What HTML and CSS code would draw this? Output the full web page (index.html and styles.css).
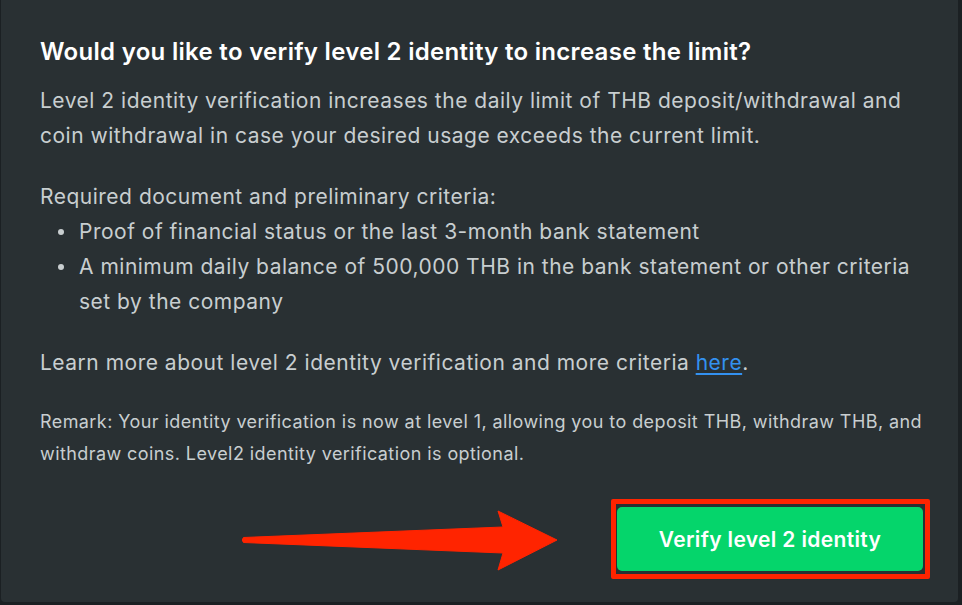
FILE: index.html
```html
<!DOCTYPE html>
<html lang="en">
<head>
<meta charset="utf-8">
<title>Verify level 2 identity</title>
<link rel="stylesheet" href="styles.css">
</head>
<body>
<div class="modal">
  <h2 class="title">Would you like to verify level 2 identity to increase the limit?</h2>
  <p class="lead">Level 2 identity verification increases the daily limit of THB deposit/withdrawal and coin withdrawal in case your desired usage exceeds the current limit.</p>
  <p class="req">Required document and preliminary criteria:</p>
  <ul class="list">
    <li>Proof of financial status or the last 3-month bank statement</li>
    <li>A minimum daily balance of 500,000 THB in the bank statement or other criteria set by the company</li>
  </ul>
  <p class="more">Learn more about level 2 identity verification and more criteria <a href="#" class="link">here</a>.</p>
  <p class="remark">Remark: Your identity verification is now at level 1, allowing you to deposit THB, withdraw THB, and withdraw coins. Level2 identity verification is optional.</p>
  <div class="actions">
    <svg class="arrow" width="330" height="70" viewBox="0 0 330 70">
      <path d="M2.5 30.5 Q0 33 2.5 35.5 L262 46 L257 63 L316 33 L257 4 L262 20 Z" fill="#ff2400" stroke="#ff2400" stroke-width="1" stroke-linejoin="round"/>
    </svg>
    <div class="btn-wrap">
      <button class="btn">Verify level 2 identity</button>
      <span class="highlight"></span>
    </div>
  </div>
</div>
</body>
</html>
```

FILE: styles.css
```css
html, body {
  margin: 0;
  padding: 0;
}
body {
  background: #1b2023;
  width: 962px;
  height: 605px;
  overflow: hidden;
  font-family: "Inter", "Noto Sans", sans-serif;
}
.modal {
  box-sizing: border-box;
  width: 957px;
  height: 602px;
  margin-left: 1px;
  background: #293033;
  border-radius: 0 0 4px 4px;
  padding: 37px 0 0 39px;
  color: #c8ced0;
}
.title {
  margin: 0;
  font-size: 24px;
  line-height: 30px;
  font-weight: 600;
  color: #ffffff;
  letter-spacing: 0.3px;
}
.lead, .req, .more {
  margin: 0;
  font-size: 21px;
  line-height: 35px;
  letter-spacing: 0.5px;
  width: 880px;
}
.lead { margin-top: 16px; }
.req { margin-top: 26px; }
.list {
  margin: 0;
  padding: 0 0 0 39px;
  font-size: 21px;
  line-height: 35px;
  letter-spacing: 0.5px;
  width: 860px;
  list-style: none;
}
.list li::before {
  content: "";
  display: inline-block;
  width: 6px;
  height: 6px;
  border-radius: 50%;
  background: currentColor;
  margin-left: -21px;
  margin-right: 15px;
  vertical-align: 4px;
}
.more { margin-top: 26px; }
.link {
  color: #3391f0;
  text-decoration: underline;
  text-underline-offset: 3px;
}
.remark {
  margin: 26px 0 0;
  font-size: 18px;
  line-height: 32px;
  letter-spacing: 0.42px;
  width: 900px;
}
.actions {
  position: relative;
  display: flex;
  justify-content: flex-end;
  padding-right: 35px;
  margin-top: 37px;
}
.arrow {
  position: absolute;
  left: 201px;
  top: 0;
}
.btn-wrap {
  position: relative;
}
.btn {
  display: block;
  width: 306px;
  height: 64px;
  border: none;
  border-radius: 5px;
  background: #05d56b;
  color: #ffffff;
  font-family: "Inter", "Noto Sans", sans-serif;
  font-size: 21px;
  font-weight: 600;
  letter-spacing: 0.35px;
}
.highlight {
  position: absolute;
  left: -6px;
  top: -8px;
  width: 309px;
  height: 70px;
  border: 5px solid #ff2400;
  border-radius: 2px;
  pointer-events: none;
}
```
